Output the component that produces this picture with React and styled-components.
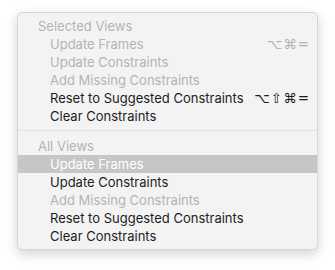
import React from 'react';
import styled, { createGlobalStyle } from 'styled-components';

const GlobalStyle = createGlobalStyle`
  html, body {
    margin: 0;
    padding: 0;
    background: #ffffff;
  }
  body {
    font-family: Inter, "Liberation Sans", sans-serif;
  }
`;

const sections = [
  {
    title: 'Selected Views',
    items: [
      { label: 'Update Frames', shortcut: '⌥⌘=', disabled: true },
      { label: 'Update Constraints', disabled: true },
      { label: 'Add Missing Constraints', disabled: true },
      { label: 'Reset to Suggested Constraints', shortcut: '⌥⇧⌘=' },
      { label: 'Clear Constraints' },
    ],
  },
  {
    title: 'All Views',
    items: [
      { label: 'Update Frames', active: true },
      { label: 'Update Constraints' },
      { label: 'Add Missing Constraints', disabled: true },
      { label: 'Reset to Suggested Constraints' },
      { label: 'Clear Constraints' },
    ],
  },
];

function App() {
  return (
    <>
      <GlobalStyle />
      <Page>
        <Menu>
          {sections.map((section, i) => (
            <React.Fragment key={section.title}>
              {i > 0 && <Separator />}
              <Header>{section.title}</Header>
              {section.items.map((item) => (
                <Item
                  key={item.label}
                  $disabled={item.disabled}
                  $active={item.active}
                >
                  <span>{item.label}</span>
                  {item.shortcut && <Shortcut>{item.shortcut}</Shortcut>}
                </Item>
              ))}
            </React.Fragment>
          ))}
        </Menu>
      </Page>
    </>
  );
}

export default App;

const Page = styled.div`
  width: 335px;
  height: 270px;
  padding: 12px 0 0 17px;
  box-sizing: border-box;
`;

const Menu = styled.div`
  width: 301px;
  box-sizing: border-box;
  padding: 4px 0;
  background: #f3f3f3;
  border: 1px solid #d6d6d6;
  border-radius: 5px;
  box-shadow: 0 4px 12px rgba(0, 0, 0, 0.18);
  font-size: 13px;
  display: flex;
  flex-direction: column;
`;

const Header = styled.div`
  height: 18px;
  line-height: 18px;
  padding-left: 20px;
  color: #b3b3b3;
`;

const Item = styled.div`
  height: 18px;
  line-height: 18px;
  padding: 0 8px 0 32px;
  display: flex;
  justify-content: space-between;
  color: ${(p) => (p.$active ? '#ffffff' : p.$disabled ? '#b3b3b3' : '#1d1d1d')};
  background: ${(p) => (p.$active ? '#c6c6c6' : 'transparent')};
`;

const Shortcut = styled.span`
  font-family: "DejaVu Sans", sans-serif;
  font-size: 13.5px;
  letter-spacing: 1px;
  margin-right: -1px;
`;

const Separator = styled.div`
  height: 1px;
  margin: 5px 0 6px;
  background: #e2e2e2;
`;
